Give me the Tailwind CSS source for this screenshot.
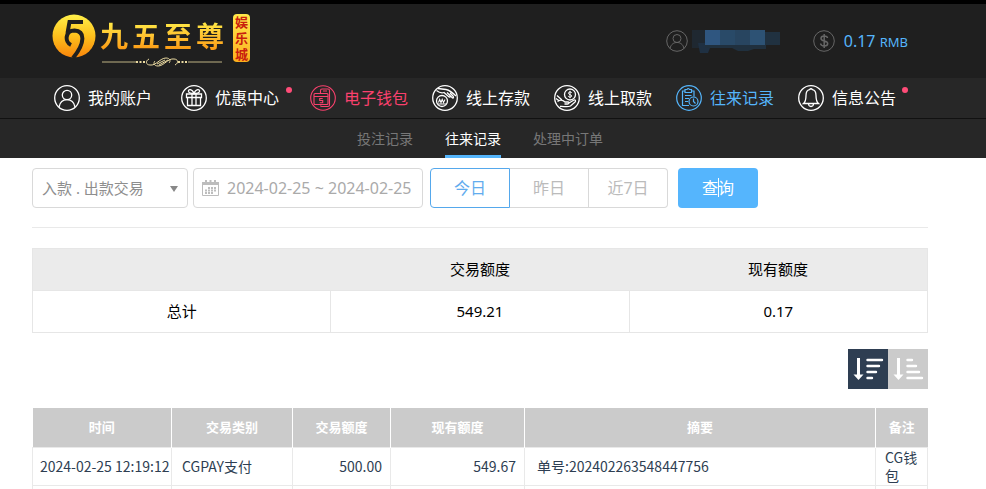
<!DOCTYPE html>
<html lang="zh-CN">
<head>
    <meta charset="utf-8"/>
    <meta content="width=device-width, initial-scale=1.0" name="viewport"/>
    <title>往来记录</title>
    <script src="https://cdn.jsdelivr.net/npm/@tailwindcss/browser@4"></script>
</head>
<body class="bg-white font-['Noto_Sans','Noto_Sans_CJK_SC',sans-serif] text-black">
    <header class="border-t-4 border-black bg-[#1f1f1f]">
        <!-- Logo and account -->
        <div class="flex h-[74px] items-center justify-between pl-[52px] pr-[78px]">
            <a href="#" class="flex items-start" aria-label="九五至尊娱乐城">
                <svg class="size-11 shrink-0" viewBox="0 0 44 44" fill="none">
                    <defs>
                        <linearGradient id="gold" x1="0" y1="0" x2="0" y2="1">
                            <stop offset="0" stop-color="#fff04a"/>
                            <stop offset="0.5" stop-color="#fdc01c"/>
                            <stop offset="1" stop-color="#f9850b"/>
                        </linearGradient>
                    </defs>
                    <circle cx="22" cy="22" r="21.500" fill="url(#gold)"/>
                    <path d="M31 8H17.500L15.500 19" stroke="#1f1f1f" stroke-width="4"/>
                    <path d="M19 31C12.500 28 13 16.500 22.500 16.500C33 17 33.500 29 21 44" stroke="#1f1f1f" stroke-width="4"/>
                </svg>
                <div class="mt-[6px] ml-1 flex flex-col items-center gap-1">
                    <div class="flex gap-1 bg-linear-to-b from-[#fff04a] to-[#f9930b] bg-clip-text text-[28px] leading-8 font-bold text-transparent">
                        <span>九</span><span>五</span><span>至</span><span>尊</span>
                    </div>
                    <svg class="h-3 w-[124px]" viewBox="0 0 124 12" fill="none" stroke="#e9d9a0">
                        <path d="M2 6H36M88 6H122" stroke-width="0.800"/>
                        <path d="M36 6h10M78 6h10" stroke-width="2" stroke-dasharray="2 1.500"/>
                        <path d="M49 3C45 5 46 9 50 9C56 10 60 2 66 2C70 2 71 5 69 7M75 9C79 7 78 3 74 3C68 2 64 10 58 10C54 10 53 7 55 5M57 8L65 4M59 9L68 4"/>
                    </svg>
                </div>
                <div class="ml-[9px] flex w-[17px] flex-col items-center rounded bg-linear-to-b from-[#ffe94a] to-[#fbb01c] text-[13px] leading-4 font-bold text-[#c8200e]">
                    <span>娱</span><span>乐</span><span>城</span>
                </div>
            </a>
            <div class="flex items-center">
                <svg class="size-[22px]" viewBox="0 0 22 22" fill="none" stroke="#666">
                    <circle cx="11" cy="11" r="10.300"/>
                    <circle cx="11" cy="8.500" r="4"/>
                    <path d="M4 18.500C5 14 8 12.500 11 12.500S17 14 18 18.500"/>
                </svg>
                <svg class="h-[26px] w-[98px]" viewBox="0 0 98 26" aria-hidden="true">
                    <path fill="#1f2831" d="M4 2H17V20H4z"/>
                    <path fill="#1f3042" d="M10 15H24L20 25H12z"/>
                    <path fill="#20303e" d="M17 15H78V21H66L60 23H50L44 20H17z"/>
                    <path fill="#2f5680" d="M17 2H32V17H17z"/>
                    <path fill="#294a68" d="M32 2H47V17H32z"/>
                    <path fill="#284560" d="M47 2H62V17H47z"/>
                    <path fill="#2d5274" d="M62 2H77V17H62z"/>
                    <path fill="#203140" d="M77 4H92V17H77z"/>
                </svg>
                <svg class="ml-[27px] size-[22px]" viewBox="0 0 22 22" fill="none" stroke="#666">
                    <circle cx="11" cy="11" r="10.300"/>
                    <path d="M14.500 8C14.300 6.500 13 6 11.200 6C9.300 6 8 6.900 8 8.400C8 11.800 14.700 10 14.700 13.500C14.700 15.200 13.200 16 11.300 16C9.300 16 7.800 15.200 7.600 13.500M11.200 4V18" stroke-width="1.500"/>
                </svg>
                <span class="ml-[9px] text-base text-[#55b5fb]">0.17 <span class="text-[13px]">RMB</span></span>
            </div>
        </div>

        <!-- Main menu -->
        <nav class="flex h-10 items-center gap-6 bg-[#272727] pl-[54px] text-base whitespace-nowrap text-white">
            <a href="#" class="flex items-center gap-2 pr-[5px]">
                <svg class="size-[26px]" viewBox="0 0 26 26" fill="none" stroke="currentColor" stroke-width="1.300">
                    <circle cx="13" cy="13" r="12.300"/>
                    <circle cx="13" cy="10" r="4.700"/>
                    <path d="M5 22C6 17 9 14.700 13 14.700S20 17 21 22"/>
                </svg>
                我的账户
            </a>
            <a href="#" class="relative flex items-center gap-2 pr-[7px]">
                <svg class="size-[26px]" viewBox="0 0 26 26" fill="none" stroke="currentColor" stroke-width="1.300">
                    <circle cx="13" cy="13" r="12.300"/>
                    <path d="M5.500 9H20.500V12.500H5.500zM6.500 12.500V20.500H19.500V12.500M11 9V20.500M15 9V20.500"/>
                    <path d="M13 8.500C11 3.500 7 4 7.500 6.500C8 8 10.500 8.500 13 8.500C15.500 8.500 18 8 18.500 6.500C19 4 15 3.500 13 8.500z"/>
                </svg>
                优惠中心
                <span class="absolute top-[2px] right-[-6px] size-[6px] rounded-full bg-[#ff4c78]"></span>
            </a>
            <a href="#" class="flex items-center gap-2 text-[#f9416d]">
                <svg class="size-[26px]" viewBox="0 0 26 26" fill="none" stroke="currentColor" stroke-width="1.100">
                    <circle cx="13" cy="13" r="12.300"/>
                    <path d="M10.500 8.500V5.500Q10.500 4 12 4H18Q19.500 4 19.500 5.500V20Q19.500 21.500 18 21.500H12Q10.500 21.500 10.500 20.500"/>
                    <rect x="4" y="8.500" width="14" height="11" rx="1"/>
                    <path d="M4 11.500H18M13 6H17M12.700 13.500H9.700V15.500H12.700V17.700H9.700"/>
                </svg>
                电子钱包
            </a>
            <a href="#" class="flex items-center gap-2">
                <svg class="size-[26px]" viewBox="0 0 26 26" fill="none" stroke="currentColor" stroke-width="1.300">
                    <circle cx="13" cy="13" r="12.300"/>
                    <circle cx="10" cy="16" r="5.500"/>
                    <path d="M6.500 17.500L7.700 14.500L9 17.500L10.200 14.500L11.500 17.500L13 14.500M6 19H14" stroke-width="1.100"/>
                    <path d="M6 3.500L14 4.500C18 5.500 21 8 24 11M4.500 5.500C7 7.500 9 8.500 12 7.500L17 12C18.500 12.500 18.500 11 17.500 10L15 7.500M17 9.500L20.500 13C21.700 13.500 21.700 12 21 11L18 8"/>
                </svg>
                线上存款
            </a>
            <a href="#" class="flex items-center gap-2">
                <svg class="size-[26px]" viewBox="0 0 26 26" fill="none" stroke="currentColor" stroke-width="1.300">
                    <circle cx="13" cy="13" r="12.300"/>
                    <circle cx="16" cy="9.500" r="5.500"/>
                    <path d="M17.700 8C17.300 6.500 14.500 6.500 14.500 8.200S17.700 9.500 17.700 11S14.500 12.500 14.200 10.900M16 5.800V13.200" stroke-width="1"/>
                    <path d="M3.500 16.500C6 14.500 9 15 11 17H14C15.500 17.300 15 19 13.500 19H10.500M15 18L20 15C21.500 14.500 22 16 21 17L16.500 21C13 22.500 9 21 6 21.500M3 10.500L8 15M2 13.500L5.500 16"/>
                </svg>
                线上取款
            </a>
            <a href="#" class="flex items-center gap-2 text-[#55b5fb]" aria-current="page">
                <svg class="size-[26px]" viewBox="0 0 26 26" fill="none" stroke="currentColor" stroke-width="1.200">
                    <circle cx="13" cy="13" r="12.300"/>
                    <path d="M9 6H6.500V20.500H13M15.500 6H18V11.500M9 4.500H11Q12.200 2.500 13.500 4.500H15.500V7.500H9zM9 10.500H15.500M9 13.500H13M9 16.500H12"/>
                    <circle cx="17.500" cy="16.500" r="4.500"/>
                    <path d="M17.500 13.500V16.500L19.500 18.500"/>
                </svg>
                往来记录
            </a>
            <a href="#" class="relative flex items-center gap-2">
                <svg class="size-[26px]" viewBox="0 0 26 26" fill="none" stroke="currentColor" stroke-width="1.300">
                    <circle cx="13" cy="13" r="12.300"/>
                    <path d="M5.500 18.500C8 16.500 8 14 8 10.500C8 7 10 5 11.500 4.700Q13 2.800 14.500 4.700C16 5 18 7 18 10.500C18 14 18 16.500 20.500 18.500zM10.500 19C10.800 22.300 15.200 22.300 15.500 19"/>
                </svg>
                信息公告
                <span class="absolute top-[2px] right-[-12px] size-[6px] rounded-full bg-[#ff4c78]"></span>
            </a>
        </nav>

        <!-- Sub menu -->
        <nav class="flex h-10 justify-center gap-8 border-t border-[#111] bg-[#272727] pr-[26px] text-sm text-[#777]">
            <a href="#" class="flex items-center">投注记录</a>
            <a href="#" class="flex items-center border-y-3 border-t-transparent border-b-[#55b5fb] text-white" aria-current="page">往来记录</a>
            <a href="#" class="flex items-center">处理中订单</a>
        </nav>
    </header>

    <main class="mr-[58px] ml-8">
        <!-- Filters -->
        <form class="flex items-center border-b border-[#e9e9e9] pt-[10px] pb-[19px]">
            <div class="relative w-[156px]">
                <select aria-label="交易类型" class="h-10 w-full appearance-none rounded border border-[#d9d9d9] bg-white pl-[9px] text-[15px] text-[#8e8e8e]">
                    <option>入款 . 出款交易</option>
                </select>
                <svg class="pointer-events-none absolute top-[18px] right-[10px] h-[6px] w-2" viewBox="0 0 8 6"><path fill="#888" d="M0 0H8L4 6z"/></svg>
            </div>
            <div class="relative ml-[5px] w-[230px]">
                <svg class="pointer-events-none absolute top-3 left-[9px] h-4 w-[17px]" viewBox="0 0 17 16">
                    <path fill="#bdbdbd" d="M0 2H3V0H5V2H7.500V0H9.500V2H12V0H14V2H17V5H0z"/>
                    <path fill="none" stroke="#bdbdbd" d="M0.500 5V15.500H16.500V5"/>
                    <path fill="none" stroke="#bdbdbd" stroke-width="2" stroke-dasharray="2 1" d="M6 8H14M3 10.500H14M3 13H11"/>
                </svg>
                <input type="text" aria-label="日期范围" value="2024-02-25 ~ 2024-02-25" class="h-10 w-full rounded border border-[#d9d9d9] pl-[33px] text-base text-[#aaa]"/>
            </div>
            <div class="ml-[7px] flex w-[238px] text-base text-[#bbb]">
                <button type="button" class="h-10 w-20 rounded-l border border-[#55a8ec] text-[#62acee]">今日</button>
                <button type="button" class="h-10 flex-1 border-y border-r border-[#d9d9d9]">昨日</button>
                <button type="button" class="h-10 flex-1 rounded-r border-y border-r border-[#d9d9d9]">近7日</button>
            </div>
            <button type="submit" class="relative ml-[10px] h-10 w-20 rounded bg-[#55b5fd] text-base text-white">
                查询
                <!-- Text cursor over the label -->
                <span class="absolute top-[10px] left-10 h-[19px] w-px bg-white"></span>
            </button>
        </form>

        <!-- Totals -->
        <table class="mt-5 w-full table-fixed border-collapse border border-[#e6e6e6] text-center text-[15px]">
            <thead class="bg-[#ebebeb]">
                <tr class="h-[42px]">
                    <th></th>
                    <th class="font-normal">交易额度</th>
                    <th class="font-normal">现有额度</th>
                </tr>
            </thead>
            <tbody>
                <tr class="h-[42px]">
                    <td class="border border-[#e6e6e6]">总计</td>
                    <td class="border border-[#e6e6e6]">549.21</td>
                    <td class="border border-[#e6e6e6]">0.17</td>
                </tr>
            </tbody>
        </table>

        <!-- Sort order -->
        <div class="mt-4 flex justify-end text-white">
            <button type="button" aria-label="降序" class="size-10 bg-[#2e3e52]">
                <svg class="size-10" viewBox="0 0 40 40" fill="none" stroke="currentColor">
                    <path d="M10.500 9V27" stroke-width="3"/>
                    <path d="M5.500 25.500H15.500L10.500 31z" fill="currentColor" stroke="none"/>
                    <path d="M19.500 11H34M19.500 17H31M19.500 23H28M19.500 29H24" stroke-width="2.400" stroke-linecap="round"/>
                </svg>
            </button>
            <button type="button" aria-label="升序" class="size-10 bg-[#cbcbcb]">
                <svg class="size-10" viewBox="0 0 40 40" fill="none" stroke="currentColor">
                    <path d="M10.500 9V27" stroke-width="3"/>
                    <path d="M5.500 25.500H15.500L10.500 31z" fill="currentColor" stroke="none"/>
                    <path d="M19.500 11H24M19.500 17H28M19.500 23H31M19.500 29H34" stroke-width="2.400" stroke-linecap="round"/>
                </svg>
            </button>
        </div>

        <!-- Records -->
        <table class="mt-[19px] w-full border-collapse font-['Noto_Sans_CJK_SC',sans-serif] text-sm leading-[18px] text-[#2e3e52]">
            <thead class="bg-[#cbcbcb] text-[13px] text-white">
                <tr class="h-[39px]">
                    <th class="w-[139px] border-r border-white">时间</th>
                    <th class="w-[121px] border-r border-white">交易类别</th>
                    <th class="w-[98px] border-r border-white">交易额度</th>
                    <th class="w-[134px] border-r border-white">现有额度</th>
                    <th class="border-r border-white">摘要</th>
                    <th class="w-[52px]">备注</th>
                </tr>
            </thead>
            <tbody>
                <tr class="h-[38px]">
                    <td class="border border-[#e9e9e9] pl-[7px] whitespace-nowrap">2024-02-25 12:19:12</td>
                    <td class="border border-[#e9e9e9] pl-[10px]">CGPAY支付</td>
                    <td class="border border-[#e9e9e9] pr-2 text-right">500.00</td>
                    <td class="border border-[#e9e9e9] pr-2 text-right">549.67</td>
                    <td class="border border-[#e9e9e9] pl-3">单号:202402263548447756</td>
                    <td class="border border-[#e9e9e9] pl-[9px]">CG钱包</td>
                </tr>
                <tr class="h-1">
                    <td class="border border-b-0 border-[#e9e9e9]"></td>
                    <td class="border border-b-0 border-[#e9e9e9]"></td>
                    <td class="border border-b-0 border-[#e9e9e9]"></td>
                    <td class="border border-b-0 border-[#e9e9e9]"></td>
                    <td class="border border-b-0 border-[#e9e9e9]"></td>
                    <td class="border border-b-0 border-[#e9e9e9]"></td>
                </tr>
            </tbody>
        </table>
    </main>
</body>
</html>
